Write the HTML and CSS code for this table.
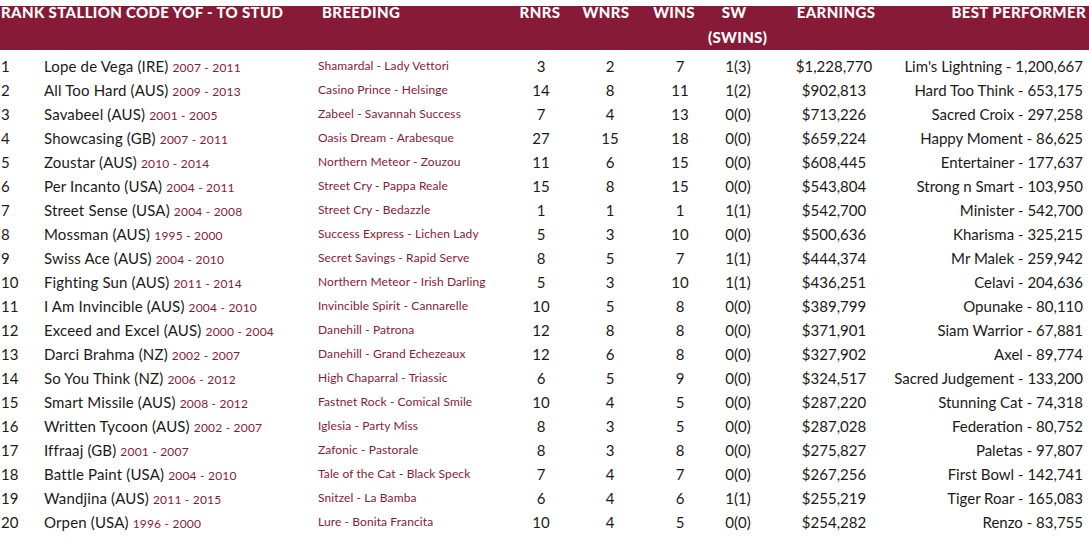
FILE: index.html
```html
<!DOCTYPE html>
<html>
<head>
<meta charset="utf-8">
<link rel="stylesheet" href="styles.css">
</head>
<body>
<div class="board">
  <div class="head">
    <div class="row hrow">
      <div class="c rank h-first">RANK STALLION CODE YOF - TO STUD</div>
      <div class="c breed h-breed">BREEDING</div>
      <div class="c num h-rnrs">RNRS</div>
      <div class="c num h-wnrs">WNRS</div>
      <div class="c num h-wins">WINS</div>
      <div class="c num h-sw">SW<br>(SWINS)</div>
      <div class="c num h-earn">EARNINGS</div>
      <div class="c best h-best">BEST PERFORMER</div>
    </div>
  </div>
  <div class="body" id="rows">
    <div class="row"><div class="c rank">1</div><div class="c stal">Lope de Vega (IRE) <span class="yr">2007 - 2011</span></div><div class="c breed">Shamardal - Lady Vettori</div><div class="c num">3</div><div class="c num">2</div><div class="c num">7</div><div class="c num">1(3)</div><div class="c num">$1,228,770</div><div class="c best">Lim's Lightning - 1,200,667</div></div>
    <div class="row"><div class="c rank">2</div><div class="c stal">All Too Hard (AUS) <span class="yr">2009 - 2013</span></div><div class="c breed">Casino Prince - Helsinge</div><div class="c num">14</div><div class="c num">8</div><div class="c num">11</div><div class="c num">1(2)</div><div class="c num">$902,813</div><div class="c best">Hard Too Think - 653,175</div></div>
    <div class="row"><div class="c rank">3</div><div class="c stal">Savabeel (AUS) <span class="yr">2001 - 2005</span></div><div class="c breed">Zabeel - Savannah Success</div><div class="c num">7</div><div class="c num">4</div><div class="c num">13</div><div class="c num">0(0)</div><div class="c num">$713,226</div><div class="c best">Sacred Croix - 297,258</div></div>
    <div class="row"><div class="c rank">4</div><div class="c stal">Showcasing (GB) <span class="yr">2007 - 2011</span></div><div class="c breed">Oasis Dream - Arabesque</div><div class="c num">27</div><div class="c num">15</div><div class="c num">18</div><div class="c num">0(0)</div><div class="c num">$659,224</div><div class="c best">Happy Moment - 86,625</div></div>
    <div class="row"><div class="c rank">5</div><div class="c stal">Zoustar (AUS) <span class="yr">2010 - 2014</span></div><div class="c breed">Northern Meteor - Zouzou</div><div class="c num">11</div><div class="c num">6</div><div class="c num">15</div><div class="c num">0(0)</div><div class="c num">$608,445</div><div class="c best">Entertainer - 177,637</div></div>
    <div class="row"><div class="c rank">6</div><div class="c stal">Per Incanto (USA) <span class="yr">2004 - 2011</span></div><div class="c breed">Street Cry - Pappa Reale</div><div class="c num">15</div><div class="c num">8</div><div class="c num">15</div><div class="c num">0(0)</div><div class="c num">$543,804</div><div class="c best">Strong n Smart - 103,950</div></div>
    <div class="row"><div class="c rank">7</div><div class="c stal">Street Sense (USA) <span class="yr">2004 - 2008</span></div><div class="c breed">Street Cry - Bedazzle</div><div class="c num">1</div><div class="c num">1</div><div class="c num">1</div><div class="c num">1(1)</div><div class="c num">$542,700</div><div class="c best">Minister - 542,700</div></div>
    <div class="row"><div class="c rank">8</div><div class="c stal">Mossman (AUS) <span class="yr">1995 - 2000</span></div><div class="c breed">Success Express - Lichen Lady</div><div class="c num">5</div><div class="c num">3</div><div class="c num">10</div><div class="c num">0(0)</div><div class="c num">$500,636</div><div class="c best">Kharisma - 325,215</div></div>
    <div class="row"><div class="c rank">9</div><div class="c stal">Swiss Ace (AUS) <span class="yr">2004 - 2010</span></div><div class="c breed">Secret Savings - Rapid Serve</div><div class="c num">8</div><div class="c num">5</div><div class="c num">7</div><div class="c num">1(1)</div><div class="c num">$444,374</div><div class="c best">Mr Malek - 259,942</div></div>
    <div class="row"><div class="c rank">10</div><div class="c stal">Fighting Sun (AUS) <span class="yr">2011 - 2014</span></div><div class="c breed">Northern Meteor - Irish Darling</div><div class="c num">5</div><div class="c num">3</div><div class="c num">10</div><div class="c num">1(1)</div><div class="c num">$436,251</div><div class="c best">Celavi - 204,636</div></div>
    <div class="row"><div class="c rank">11</div><div class="c stal">I Am Invincible (AUS) <span class="yr">2004 - 2010</span></div><div class="c breed">Invincible Spirit - Cannarelle</div><div class="c num">10</div><div class="c num">5</div><div class="c num">8</div><div class="c num">0(0)</div><div class="c num">$389,799</div><div class="c best">Opunake - 80,110</div></div>
    <div class="row"><div class="c rank">12</div><div class="c stal">Exceed and Excel (AUS) <span class="yr">2000 - 2004</span></div><div class="c breed">Danehill - Patrona</div><div class="c num">12</div><div class="c num">8</div><div class="c num">8</div><div class="c num">0(0)</div><div class="c num">$371,901</div><div class="c best">Siam Warrior - 67,881</div></div>
    <div class="row"><div class="c rank">13</div><div class="c stal">Darci Brahma (NZ) <span class="yr">2002 - 2007</span></div><div class="c breed">Danehill - Grand Echezeaux</div><div class="c num">12</div><div class="c num">6</div><div class="c num">8</div><div class="c num">0(0)</div><div class="c num">$327,902</div><div class="c best">Axel - 89,774</div></div>
    <div class="row"><div class="c rank">14</div><div class="c stal">So You Think (NZ) <span class="yr">2006 - 2012</span></div><div class="c breed">High Chaparral - Triassic</div><div class="c num">6</div><div class="c num">5</div><div class="c num">9</div><div class="c num">0(0)</div><div class="c num">$324,517</div><div class="c best">Sacred Judgement - 133,200</div></div>
    <div class="row"><div class="c rank">15</div><div class="c stal">Smart Missile (AUS) <span class="yr">2008 - 2012</span></div><div class="c breed">Fastnet Rock - Comical Smile</div><div class="c num">10</div><div class="c num">4</div><div class="c num">5</div><div class="c num">0(0)</div><div class="c num">$287,220</div><div class="c best">Stunning Cat - 74,318</div></div>
    <div class="row"><div class="c rank">16</div><div class="c stal">Written Tycoon (AUS) <span class="yr">2002 - 2007</span></div><div class="c breed">Iglesia - Party Miss</div><div class="c num">8</div><div class="c num">3</div><div class="c num">5</div><div class="c num">0(0)</div><div class="c num">$287,028</div><div class="c best">Federation - 80,752</div></div>
    <div class="row"><div class="c rank">17</div><div class="c stal">Iffraaj (GB) <span class="yr">2001 - 2007</span></div><div class="c breed">Zafonic - Pastorale</div><div class="c num">8</div><div class="c num">3</div><div class="c num">8</div><div class="c num">0(0)</div><div class="c num">$275,827</div><div class="c best">Paletas - 97,807</div></div>
    <div class="row"><div class="c rank">18</div><div class="c stal">Battle Paint (USA) <span class="yr">2004 - 2010</span></div><div class="c breed">Tale of the Cat - Black Speck</div><div class="c num">7</div><div class="c num">4</div><div class="c num">7</div><div class="c num">0(0)</div><div class="c num">$267,256</div><div class="c best">First Bowl - 142,741</div></div>
    <div class="row"><div class="c rank">19</div><div class="c stal">Wandjina (AUS) <span class="yr">2011 - 2015</span></div><div class="c breed">Snitzel - La Bamba</div><div class="c num">6</div><div class="c num">4</div><div class="c num">6</div><div class="c num">1(1)</div><div class="c num">$255,219</div><div class="c best">Tiger Roar - 165,083</div></div>
    <div class="row"><div class="c rank">20</div><div class="c stal">Orpen (USA) <span class="yr">1996 - 2000</span></div><div class="c breed">Lure - Bonita Francita</div><div class="c num">10</div><div class="c num">4</div><div class="c num">5</div><div class="c num">0(0)</div><div class="c num">$254,282</div><div class="c best">Renzo - 83,755</div></div>
  </div>
</div>
</body>
</html>
```

FILE: styles.css
```css
html, body {
  margin: 0;
  padding: 0;
  background: #ffffff;
}
body {
  font-family: "Lato", "Open Sans", sans-serif;
  color: #1a1a1a;
  width: 1089px;
}
.board {
  padding-top: 6px;
}
.head {
  display: flow-root;
  background: #861a37;
  height: 44px;
}
.row {
  display: grid;
  grid-template-columns: 44px 274px 192px 62px 76px 64px 52px 140px 179px;
  height: 24px;
  line-height: 24px;
  font-size: 15px;
  white-space: nowrap;
}
.hrow {
  margin-top: -6px;
  height: 48px;
  color: #ffffff;
  font-weight: 900;
  font-size: 15px;
  letter-spacing: 0.35px;
  line-height: 24px;
}
.h-first {
  grid-column: 1 / 3;
}
.h-breed { padding-left: 4px; }
.h-rnrs { transform: translateX(-1px); }
.h-wnrs { transform: translateX(-4px); }
.h-wins { transform: translateX(-6px); }
.h-sw { line-height: 25px; transform: translateX(-4px); }
.h-earn { transform: translateX(2px); }
.h-best { transform: translateX(3px); }
.body {
  padding-top: 4px;
}
.rank {
  padding-left: 1px;
}
.stal {
  letter-spacing: 0.15px;
}
.yr {
  font-size: 12px;
  letter-spacing: 0.2px;
  color: #861a37;
}
.breed {
  font-size: 12px;
  letter-spacing: 0.1px;
  color: #861a37;
}
.hrow .breed {
  color: #ffffff;
  font-size: 15px;
  font-weight: 900;
  letter-spacing: 0.35px;
}
.num {
  text-align: center;
}
.best {
  display: flex;
  justify-content: flex-end;
}
```
